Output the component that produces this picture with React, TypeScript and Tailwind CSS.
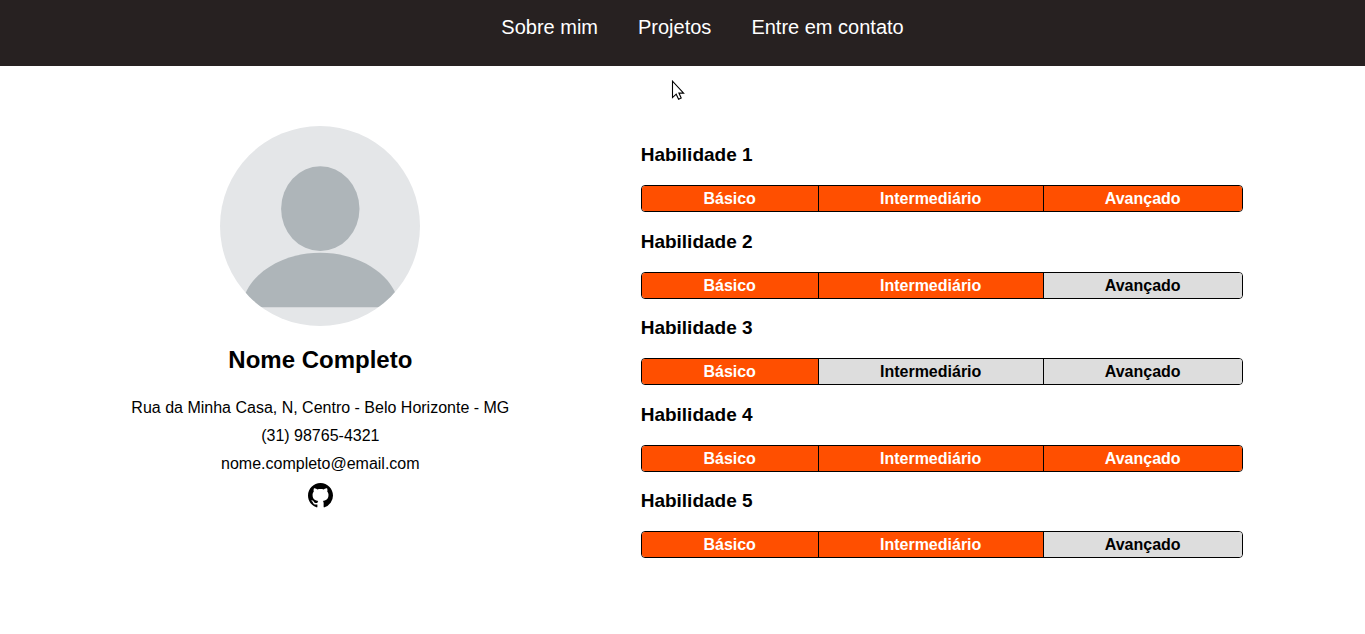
const links = [
  { label: 'Sobre mim', href: '#sobre' },
  { label: 'Projetos', href: '#projetos' },
  { label: 'Entre em contato', href: '#contato' },
];

const levels = ['Básico', 'Intermediário', 'Avançado'];

const skills = [
  { name: 'Habilidade 1', level: 3 },
  { name: 'Habilidade 2', level: 2 },
  { name: 'Habilidade 3', level: 1 },
  { name: 'Habilidade 4', level: 3 },
  { name: 'Habilidade 5', level: 2 },
];

function Avatar() {
  return (
    <svg viewBox="0 0 200 200" className="size-[200px] rounded-full" role="img" aria-label="Foto de perfil">
      <rect width="200" height="200" fill="#e4e6e8" />
      <ellipse cx="100.3" cy="82.7" rx="39.2" ry="42.4" fill="#aeb5b9" />
      <path d="M22 181.2C24 152 58 126.8 100.3 126.8S177 152 179 181.2Z" fill="#aeb5b9" />
    </svg>
  );
}

function GithubMark() {
  return (
    <svg viewBox="0 0 16 16" className="size-[25px]" fill="black" aria-hidden="true">
      <path
        fillRule="evenodd"
        d="M8 0C3.58 0 0 3.58 0 8c0 3.54 2.29 6.53 5.47 7.59.4.07.55-.17.55-.38 0-.19-.01-.82-.01-1.49-2.01.37-2.53-.49-2.69-.94-.09-.23-.48-.94-.82-1.13-.28-.15-.68-.52-.01-.53.63-.01 1.08.58 1.23.82.72 1.21 1.87.87 2.33.66.07-.52.28-.87.51-1.07-1.78-.2-3.64-.89-3.64-3.95 0-.87.31-1.59.82-2.15-.08-.2-.36-1.02.08-2.12 0 0 .67-.21 2.2.82.64-.18 1.32-.27 2-.27s1.36.09 2 .27c1.53-1.04 2.2-.82 2.2-.82.44 1.1.16 1.92.08 2.12.51.56.82 1.27.82 2.15 0 3.07-1.87 3.75-3.65 3.95.29.25.54.73.54 1.48 0 1.07-.01 1.93-.01 2.2 0 .21.15.46.55.38A8.01 8.01 0 0 0 16 8c0-4.42-3.58-8-8-8z"
      />
    </svg>
  );
}

function Pointer() {
  return (
    <svg
      viewBox="0 0 14 22"
      className="pointer-events-none absolute top-[80px] left-[671px] h-[22px] w-[14px]"
      aria-hidden="true"
    >
      <path
        d="M1.5 1.2V17.6L5.2 14.2L7.6 19.2L10.2 18L7.9 13.1H12.6Z"
        fill="white"
        stroke="black"
        strokeWidth="1.1"
      />
    </svg>
  );
}

function SkillBar({ level }: { level: number }) {
  return (
    <ol className="grid grid-cols-[177fr_225fr_198fr] overflow-hidden rounded border border-black text-center text-base leading-[25px] font-bold">
      {levels.map((label, i) => (
        <li
          key={label}
          className={`border-black not-last:border-r ${i < level ? 'bg-[#ff4f00] text-white' : 'bg-[#dddddd] text-black'}`}
        >
          {label}
        </li>
      ))}
    </ol>
  );
}

export default function App() {
  return (
    <div className="relative min-h-screen bg-white font-['Liberation_Sans',Arial,sans-serif] text-black">
      <header className="bg-[#272121] pt-4 pb-7">
        <nav>
          <ul className="flex justify-center gap-10 pl-10 text-xl leading-[22px] text-white">
            {links.map((link) => (
              <li key={link.label}>
                <a href={link.href}>{link.label}</a>
              </li>
            ))}
          </ul>
        </nav>
      </header>

      <main className="flex flex-wrap items-start justify-evenly pt-[60px]">
        <section className="flex w-[396px] flex-col items-center text-center">
          <Avatar />
          <h1 className="mt-5 text-2xl leading-7 font-bold">Nome Completo</h1>
          <address className="mt-5 text-base leading-7 not-italic">
            <p>Rua da Minha Casa, N, Centro - Belo Horizonte - MG</p>
            <p>(31) 98765-4321</p>
            <p>nome.completo@email.com</p>
          </address>
          <a href="#github" aria-label="GitHub" className="mt-[5px]">
            <GithubMark />
          </a>
        </section>

        <section className="mt-[18px] flex min-h-[414px] w-[602px] flex-col justify-between">
          {skills.map((skill) => (
            <article key={skill.name}>
              <h2 className="mb-[19px] text-[19px] leading-[22px] font-bold">{skill.name}</h2>
              <SkillBar level={skill.level} />
            </article>
          ))}
        </section>
      </main>
      <Pointer />
    </div>
  );
}
